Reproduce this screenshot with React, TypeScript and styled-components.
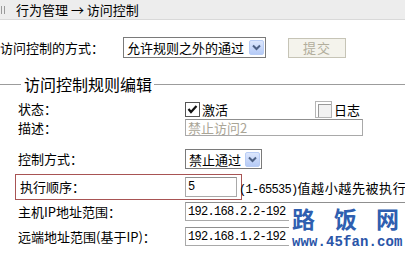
import styled, { createGlobalStyle } from "styled-components";

const Global = createGlobalStyle`
    html, body {
        margin: 0;
        padding: 0;
        background: #ffffff;
        overflow: hidden;
    }
    body {
        width: 405px;
        height: 254px;
        font-family: "Noto Sans CJK SC", "Liberation Sans", sans-serif;
        font-size: 13px;
        color: #000;
    }
`;

const Page = styled.div`
    position: relative;
    width: 405px;
    height: 254px;
    overflow: hidden;
`;

const Header = styled.div`
    height: 19px;
    background: #ededed;
    border-bottom: 1px solid #d9d9d9;
    display: flex;
    align-items: center;
    padding-left: 1px;
    gap: 11px;
    font-size: 13px;
    line-height: 19px;
    white-space: nowrap;
`;

const Grip = styled.span`
    width: 2px;
    height: 8px;
    border-left: 1px solid #9a9a9a;
    border-right: 1px solid #9a9a9a;
`;

const MethodRow = styled.div`
    display: flex;
    align-items: center;
    margin-top: 17px;
    height: 21px;
`;

const Label = styled.span<{ $w: number }>`
    width: ${(p) => p.$w}px;
    flex: none;
    white-space: nowrap;
    line-height: 16px;
`;

const Select = styled.div<{ $w: number; $h: number }>`
    width: ${(p) => p.$w}px;
    height: ${(p) => p.$h}px;
    box-sizing: border-box;
    border: 1px solid #7a7a7a;
    background: #fff;
    display: flex;
    align-items: center;
    justify-content: space-between;
    padding: 0 1px 0 3px;
    white-space: nowrap;
    flex: none;
`;

const DropBtn = styled.span`
    width: 15px;
    height: 15px;
    box-sizing: border-box;
    border: 1px solid #b9cdf5;
    border-radius: 2px;
    background: linear-gradient(#dce7fd, #b6cbf7);
    display: flex;
    align-items: center;
    justify-content: center;
`;

const SubmitBtn = styled.span`
    margin-left: 22px;
    width: 58px;
    height: 20px;
    box-sizing: border-box;
    border: 1px solid #c6c4b6;
    background: #f4f3ec;
    color: #b2ae9c;
    display: flex;
    align-items: center;
    justify-content: center;
    letter-spacing: 1px;
`;

const LegendRow = styled.div`
    margin-top: 17px;
    height: 18px;
    display: flex;
    align-items: center;
`;

const Rule = styled.span<{ $w?: number }>`
    height: 1px;
    background: #9c9c9c;
    ${(p) => (p.$w ? `width: ${p.$w}px; flex: none;` : "flex: 1;")}
`;

const LegendText = styled.span`
    font-size: 16px;
    line-height: 18px;
    padding: 0 2px 0 3px;
    white-space: nowrap;
`;

const FieldRow = styled.div<{ $mt: number; $h: number }>`
    margin-top: ${(p) => p.$mt}px;
    height: ${(p) => p.$h}px;
    padding-left: 18px;
    display: flex;
    align-items: center;
    white-space: nowrap;
`;

const MarkedRow = styled.div`
    margin: 5px 0 0 15px;
    width: 227px;
    height: 26px;
    box-sizing: border-box;
    border: 1px solid #a85454;
    padding-left: 4px;
    display: flex;
    align-items: center;
    white-space: nowrap;
`;

const Box = styled.span<{ $on?: boolean; $size: number }>`
    width: ${(p) => p.$size}px;
    height: ${(p) => p.$size}px;
    box-sizing: border-box;
    flex: none;
    display: flex;
    align-items: center;
    justify-content: center;
    background: ${(p) => (p.$on ? "#fff" : "#f2f2f2")};
    border: 1px solid ${(p) => (p.$on ? "#555" : "#b5b5b5")};
    box-shadow: ${(p) => (p.$on ? "none" : "inset 2px 2px 0 #ffffff, inset 3px 3px 0 #9a9a9a")};
`;

const BoxText = styled.span<{ $ml: number }>`
    margin-left: ${(p) => p.$ml}px;
    margin-right: 2px;
`;

const Input = styled.span<{ $w: number; $h: number; $muted?: boolean; $mono?: boolean }>`
    width: ${(p) => p.$w}px;
    height: ${(p) => p.$h}px;
    box-sizing: border-box;
    flex: none;
    border: 1px solid #a9a9a9;
    border-top-color: #8f8f8f;
    background: #fff;
    display: flex;
    align-items: center;
    padding-left: 2px;
    overflow: hidden;
    color: ${(p) => (p.$muted ? "#aaa596" : "#000")};
    font-family: ${(p) => (p.$mono ? `"Liberation Mono", monospace` : "inherit")};
    font-size: ${(p) => (p.$mono ? "12px" : "13px")};
    letter-spacing: ${(p) => (p.$mono ? "-0.7px" : "0")};
`;

const Hint = styled.span`
    margin-left: 2px;
    white-space: nowrap;
    letter-spacing: 0.6px;
`;

const Mono = styled.span`
    font-family: "Liberation Mono", monospace;
    font-size: 12px;
    letter-spacing: -0.7px;
`;

const Watermark = styled.div`
    position: absolute;
    left: 289px;
    top: 204px;
    width: 116px;
    height: 50px;
    background: #fff;
    color: #2f5fb0;
    display: flex;
    flex-direction: column;
    align-items: flex-start;
`;

const MarkTitle = styled.div`
    margin: 1px 0 0 3px;
    display: flex;
    gap: 19px;
    font-family: "Noto Sans CJK SC", serif;
    font-weight: 700;
    font-size: 23px;
    line-height: 27px;
`;

const MarkUrl = styled.span`
    margin: 4px 0 0 3px;
    font-family: "Liberation Mono", monospace;
    font-weight: 700;
    font-size: 14px;
    line-height: 12px;
    letter-spacing: 0.1px;
    white-space: nowrap;
    color: #2a55a8;
`;

function Arrow() {
    return (
        <svg width="9" height="7" viewBox="0 0 9 7">
            <path d="M1 1.5 L4.5 5 L8 1.5" fill="none" stroke="#4d6185" strokeWidth="2" />
        </svg>
    );
}

function Check() {
    return (
        <svg width="11" height="11" viewBox="0 0 11 11">
            <path d="M1.5 5 L4 8 L9.5 2" fill="none" stroke="#111" strokeWidth="2.2" />
        </svg>
    );
}

export default function App() {
    return (
        <Page>
            <Global />
            <Header>
                <Grip />
                <span>行为管理 → 访问控制</span>
            </Header>

            <MethodRow>
                <Label $w={123}>访问控制的方式：</Label>
                <Select $w={143} $h={21}>
                    <span>允许规则之外的通过</span>
                    <DropBtn><Arrow /></DropBtn>
                </Select>
                <SubmitBtn>提交</SubmitBtn>
            </MethodRow>

            <LegendRow>
                <Rule $w={21} />
                <LegendText>访问控制规则编辑</LegendText>
                <Rule />
            </LegendRow>

            <FieldRow $mt={7} $h={18}>
                <Label $w={167}>状态：</Label>
                <Box $on $size={15}><Check /></Box>
                <BoxText $ml={2}>激活</BoxText>
                <Box $size={17} style={{ marginLeft: 85 }} />
                <BoxText $ml={2}>日志</BoxText>
            </FieldRow>

            <FieldRow $mt={1} $h={17}>
                <Label $w={167}>描述：</Label>
                <Input $w={178} $h={17} $muted>禁止访问2</Input>
            </FieldRow>

            <FieldRow $mt={13} $h={20}>
                <Label $w={167}>控制方式：</Label>
                <Select $w={77} $h={20}>
                    <span>禁止通过</span>
                    <DropBtn><Arrow /></DropBtn>
                </Select>
            </FieldRow>

            <MarkedRow>
                <Label $w={165}>执行顺序：</Label>
                <Input $w={52} $h={20} $mono>5</Input>
                <Hint>
                    <Mono>(1-65535)</Mono>值越小越先被执行
                </Hint>
            </MarkedRow>

            <FieldRow $mt={2} $h={19}>
                <Label $w={167}>主机IP地址范围：</Label>
                <Input $w={240} $h={19} $mono>192.168.2.2-192</Input>
            </FieldRow>

            <FieldRow $mt={6} $h={19}>
                <Label $w={167}>远端地址范围(基于IP)：</Label>
                <Input $w={240} $h={19} $mono>192.168.1.2-192</Input>
            </FieldRow>

            <Watermark>
                <MarkTitle>
                    <span>路</span>
                    <span>饭</span>
                    <span>网</span>
                </MarkTitle>
                <MarkUrl>www.45fan.com</MarkUrl>
            </Watermark>
        </Page>
    );
}
